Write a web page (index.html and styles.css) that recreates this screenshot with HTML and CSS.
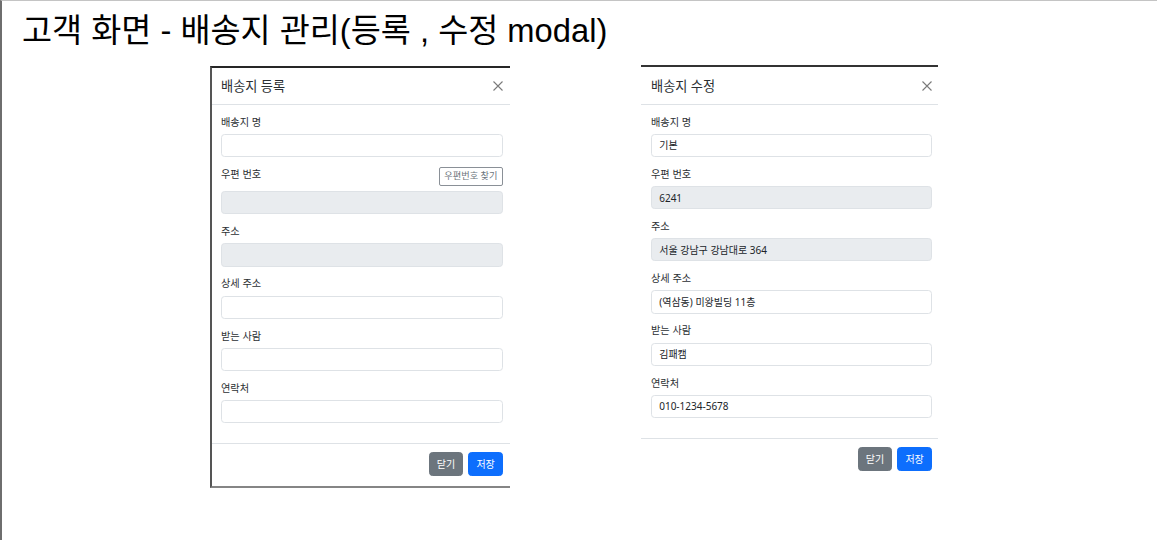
FILE: index.html
```html
<!DOCTYPE html>
<html lang="ko">
<head>
<meta charset="utf-8">
<title>고객 화면 - 배송지 관리</title>
<link rel="stylesheet" href="styles.css">
</head>
<body>
<div class="frame">
  <h1 class="page-title">고객 화면 - 배송지 관리(등록 , 수정 modal)</h1>
  <div class="stage">
    <section class="modal modal-a">
      <header class="modal-header">
        <h2 class="modal-title">배송지 등록</h2>
        <svg class="btn-close" width="10" height="10" viewBox="0 0 10 10"><path d="M0.5 0.5L9.5 9.5M9.5 0.5L0.5 9.5" stroke="#7a7a7a" stroke-width="1.1" fill="none"/></svg>
      </header>
      <div class="modal-body">
        <div class="field">
          <label class="form-label">배송지 명</label>
          <div class="form-control"></div>
        </div>
        <div class="field">
          <div class="label-row">
            <label class="form-label">우편 번호</label>
            <span class="btn-outline">우편번호 찾기</span>
          </div>
          <div class="form-control readonly"></div>
        </div>
        <div class="field">
          <label class="form-label">주소</label>
          <div class="form-control readonly"></div>
        </div>
        <div class="field">
          <label class="form-label">상세 주소</label>
          <div class="form-control"></div>
        </div>
        <div class="field">
          <label class="form-label">받는 사람</label>
          <div class="form-control"></div>
        </div>
        <div class="field">
          <label class="form-label">연락처</label>
          <div class="form-control"></div>
        </div>
      </div>
      <footer class="modal-footer">
        <span class="btn btn-secondary">닫기</span>
        <span class="btn btn-primary">저장</span>
      </footer>
    </section>

    <section class="modal modal-b">
      <header class="modal-header">
        <h2 class="modal-title">배송지 수정</h2>
        <svg class="btn-close" width="10" height="10" viewBox="0 0 10 10"><path d="M0.5 0.5L9.5 9.5M9.5 0.5L0.5 9.5" stroke="#7a7a7a" stroke-width="1.1" fill="none"/></svg>
      </header>
      <div class="modal-body">
        <div class="field">
          <label class="form-label">배송지 명</label>
          <div class="form-control">기본</div>
        </div>
        <div class="field">
          <label class="form-label">우편 번호</label>
          <div class="form-control readonly">6241</div>
        </div>
        <div class="field">
          <label class="form-label">주소</label>
          <div class="form-control readonly">서울 강남구 강남대로 364</div>
        </div>
        <div class="field">
          <label class="form-label">상세 주소</label>
          <div class="form-control">(역삼동) 미왕빌딩 11층</div>
        </div>
        <div class="field">
          <label class="form-label">받는 사람</label>
          <div class="form-control">김패캠</div>
        </div>
        <div class="field">
          <label class="form-label">연락처</label>
          <div class="form-control">010-1234-5678</div>
        </div>
      </div>
      <footer class="modal-footer">
        <span class="btn btn-secondary">닫기</span>
        <span class="btn btn-primary">저장</span>
      </footer>
    </section>
  </div>
</div>
</body>
</html>
```

FILE: styles.css
```css
html, body {
  margin: 0;
  padding: 0;
  background: #fff;
}

.frame {
  box-sizing: border-box;
  height: 540px;
  border-top: 1px solid #c4c4c4;
  border-left: 2px solid #6e6e6e;
}

.page-title {
  margin: 0;
  padding: 12px 0 0 20px;
  font-family: "Liberation Sans", "Noto Sans CJK KR", sans-serif;
  font-weight: normal;
  font-size: 32.7px;
  line-height: 36px;
  color: #000;
}

.stage {
  display: flex;
  align-items: flex-start;
  gap: 131px;
  margin-top: 16px;
  padding-left: 208px;
}

.modal {
  box-sizing: border-box;
  background: #fff;
  font-family: "Noto Sans", "Noto Sans CJK KR", sans-serif;
  color: #212529;
  --pl: 9px;
  --pr: 7px;
}

.modal-a {
  width: 300px;
  margin-top: 1px;
  border-left: 2px solid #555;
  border-top: 2px solid #262626;
  border-bottom: 2px solid #858585;
}

.modal-b {
  width: 297px;
  border-top: 2px solid #333;
  --pl: 10px;
  --pr: 6px;
}

.modal-header {
  display: flex;
  align-items: center;
  justify-content: space-between;
  padding: 9px var(--pr) 9px var(--pl);
  border-bottom: 1px solid #dee2e6;
}

.modal-b .modal-header {
  padding-top: 10px;
}

.modal-title {
  margin: 0;
  font-size: 13.2px;
  line-height: 18px;
  font-weight: normal;
  color: #2b2f33;
}

.btn-close {
  display: block;
}

.modal-body {
  padding: 9.6px var(--pr) 10px var(--pl);
}

.field {
  margin-bottom: 9.8px;
}

.form-label {
  display: block;
  margin-bottom: 4.8px;
  font-size: 10.2px;
  line-height: 14.4px;
  color: #2b2f33;
}

.label-row {
  display: flex;
  justify-content: space-between;
  align-items: flex-start;
}

.btn-outline {
  box-sizing: border-box;
  display: inline-block;
  height: 19.6px;
  margin-bottom: 4.8px;
  padding: 2.4px 4.6px;
  border: 1px solid #8a9097;
  border-radius: 2px;
  font-size: 9.2px;
  line-height: 12.6px;
  color: #6c757d;
  white-space: nowrap;
}

.form-control {
  box-sizing: border-box;
  height: 23.2px;
  padding: 3.6px 7.2px;
  border: 1px solid #dee2e6;
  border-radius: 3.6px;
  font-size: 10px;
  line-height: 14.4px;
  color: #212529;
  background: #fff;
  white-space: nowrap;
}

.form-control.readonly {
  background: #e9ecef;
}

.modal-footer {
  display: flex;
  justify-content: flex-end;
  align-items: center;
  padding: 6.2px calc(var(--pr) - 2.4px) 7.6px var(--pl);
  border-top: 1px solid #dee2e6;
}

.btn {
  box-sizing: border-box;
  display: inline-block;
  margin: 2.4px;
  padding: 4px 7.2px;
  border: 1px solid transparent;
  border-radius: 3.6px;
  font-size: 10px;
  line-height: 14.4px;
  height: 23.6px;
  color: #fff;
}

.btn-secondary {
  background: #6c757d;
  border-color: #6c757d;
}

.btn-primary {
  background: #0d6efd;
  border-color: #0d6efd;
}
```
